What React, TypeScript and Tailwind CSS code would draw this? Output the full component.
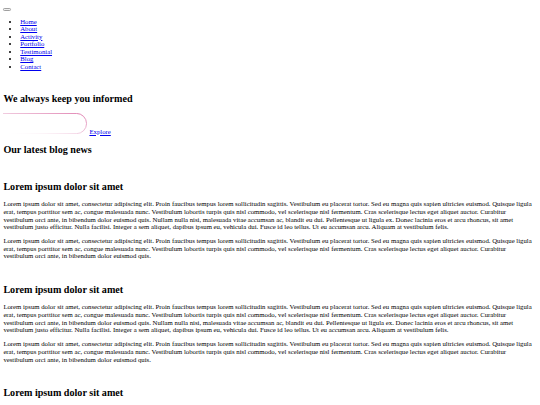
import React from "react";

const P1 =
  "Lorem ipsum dolor sit amet, consectetur adipiscing elit. Proin faucibus tempus lorem sollicitudin sagittis. Vestibulum eu placerat tortor. Sed eu magna quis sapien ultricies euismod. Quisque ligula erat, tempus porttitor sem ac, congue malesuada nunc. Vestibulum lobortis turpis quis nisl commodo, vel scelerisque nisl fermentum. Cras scelerisque lectus eget aliquet auctor. Curabitur vestibulum orci ante, in bibendum dolor euismod quis. Nullam nulla nisi, malesuada vitae accumsan ac, blandit eu dui. Pellentesque ut ligula ex. Donec lacinia eros et arcu rhoncus, sit amet vestibulum justo efficitur. Nulla facilisi. Integer a sem aliquet, dapibus ipsum eu, vehicula dui. Fusce id leo tellus. Ut eu accumsan arcu. Aliquam at vestibulum felis.";
const P2 =
  "Lorem ipsum dolor sit amet, consectetur adipiscing elit. Proin faucibus tempus lorem sollicitudin sagittis. Vestibulum eu placerat tortor. Sed eu magna quis sapien ultricies euismod. Quisque ligula erat, tempus porttitor sem ac, congue malesuada nunc. Vestibulum lobortis turpis quis nisl commodo, vel scelerisque nisl fermentum. Cras scelerisque lectus eget aliquet auctor. Curabitur vestibulum orci ante, in bibendum dolor euismod quis.";

const NAV = ["Home", "About", "Activity", "Portfolio", "Testimonial", "Blog", "Contact"];

function Post() {
  return (
    <article>
      <div aria-hidden className="h-[20.5px]" />
      <h2 className="text-[24px] font-bold my-[19.92px] leading-[26.85px]">Lorem ipsum dolor sit amet</h2>
      <p className="my-4">{P1}</p>
      <p className="my-4">{P2}</p>
    </article>
  );
}

function Pill() {
  return (
    <svg width="200" height="50" viewBox="0 0 200 50" className="inline-block align-baseline">
      <defs>
        <linearGradient id="pillGrad" x1="0" y1="1" x2="1" y2="0">
          <stop offset="0" stopColor="#ffffff" stopOpacity="0" />
          <stop offset="0.55" stopColor="#e6a3c6" stopOpacity="0.85" />
          <stop offset="1" stopColor="#d9649f" />
        </linearGradient>
      </defs>
      <path d="M0 1 H174 A24 24 0 0 1 174 49 H0" fill="none" stroke="url(#pillGrad)" strokeWidth="2" />
    </svg>
  );
}

export default function App() {
  return (
    <div className="w-[1280px] h-[960px] overflow-hidden bg-white text-black [zoom:0.421875] [font-family:'Liberation_Serif',serif] text-[16px] leading-[17.9px] p-2">
      <header>
        <div className="h-[17.9px] pt-[11px]">
          <button
            type="button"
            aria-label="menu"
            className="block w-[17px] h-[7px] bg-[#efefef] border border-[#a0a0a0] rounded-[3px]"
          />
        </div>
        <ul className="list-disc pl-10 my-4">
          {NAV.map((n) => (
            <li key={n}>
              <a href="#" className="text-[#0000ee] underline">
                {n}
              </a>
            </li>
          ))}
        </ul>
      </header>
      <section>
        <div aria-hidden>{"\u00a0"}</div>
        <h2 className="text-[24px] font-bold my-[19.92px] leading-[26.85px]">We always keep you informed</h2>
        <div>
          <Pill />{" "}
          <a href="#" className="text-[#0000ee] underline">
            Explore
          </a>
        </div>
      </section>
      <section>
        <h2 className="text-[24px] font-bold my-[19.92px] leading-[26.85px]">Our latest blog news</h2>
        <Post />
        <Post />
        <Post />
      </section>
    </div>
  );
}
